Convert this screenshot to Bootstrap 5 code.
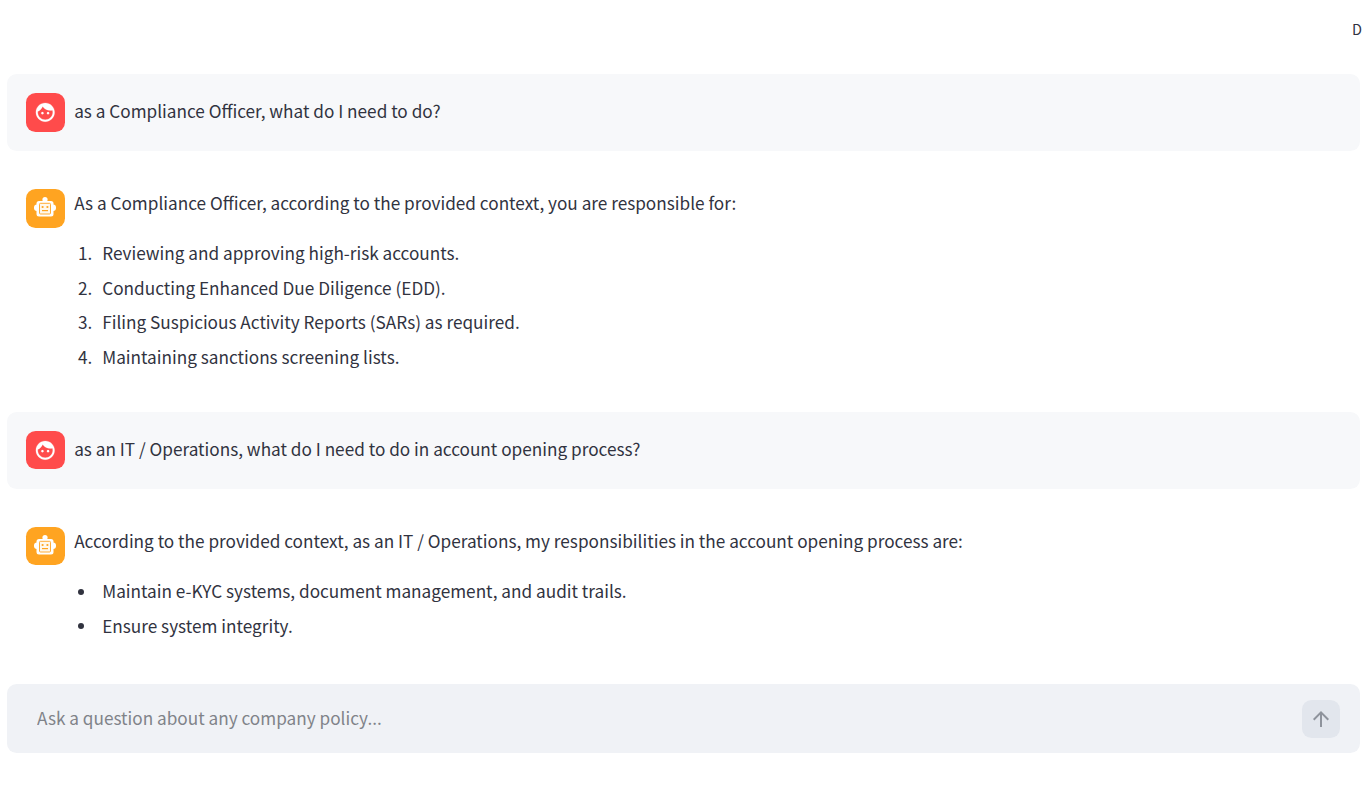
<!DOCTYPE html>
<html lang="en">
  <head>
    <meta charset="UTF-8" />
    <meta name="viewport" content="width=device-width, initial-scale=1.0" />
    <title>Company Policy Chat</title>
    <link href="https://cdn.jsdelivr.net/npm/bootstrap@5.3.3/dist/css/bootstrap.min.css" rel="stylesheet" />
    <style>
      html, body {
        height: 100%;
        overflow: hidden;
      }

      body {
        background-color: #fff;
        color: #31333f;
        font-family: "Noto Sans CJK JP", "Noto Sans", sans-serif;
        font-size: 17.2px;
        line-height: 30.72px;
      }

      .app-top {
        height: 74px;
        padding-top: 18px;
        font-size: 14.5px;
        line-height: 22px;
      }

      .chat-wrap {
        padding-left: 7px;
        padding-right: 2px;
      }

      .chat-msg {
        padding: 19.2px;
        gap: 9.6px;
        border-radius: 9.6px;
        margin-bottom: 19.2px;
      }

      .chat-msg-user {
        background-color: #f7f8fa;
      }

      .chat-avatar {
        width: 38.4px;
        height: 38.4px;
        border-radius: 9.6px;
        color: #fff;
      }

      .chat-avatar svg {
        fill: currentColor;
      }

      .face-icon {
        width: 22.5px;
        height: 22.5px;
        stroke: currentColor;
        stroke-width: 0.2;
      }

      .bot-icon {
        width: 24px;
        height: 24px;
      }

      .avatar-user {
        background-color: #ff4b4b;
      }

      .avatar-bot {
        background-color: #ffa421;
      }

      .chat-body {
        margin-top: -0.7px;
        margin-bottom: 0.7px;
      }

      .chat-body p {
        margin-bottom: 19.2px;
      }

      .chat-body p:last-child,
      .chat-body ul,
      .chat-body ol {
        margin-bottom: 0;
      }

      .chat-body ol {
        padding-left: 28px;
      }

      .chat-body ul {
        padding-left: 3.5px;
        list-style: none;
      }

      .chat-body li + li {
        margin-top: 3.84px;
      }

      .chat-body ol li::marker {
        content: counter(list-item) ".\00a0\00a0\200a\200a";
      }

      .chat-body ul li {
        display: flex;
        align-items: center;
      }

      .chat-body ul li::before {
        content: "";
        width: 6px;
        height: 6px;
        margin-right: 18.5px;
        border-radius: 50%;
        background-color: #31333f;
      }

      .chat-input-wrap {
        margin-top: 23px;
      }

      .chat-input-box {
        height: 69px;
        background-color: #f0f2f6;
        border-radius: 9.6px;
        padding-left: 30px;
        padding-right: 20px;
      }

      .chat-input {
        background: transparent;
        border: 0;
        padding: 0 0 1px;
        color: #31333f;
        font-size: 17.2px;
        line-height: 30.72px;
      }

      .chat-input:focus {
        background: transparent;
        box-shadow: none;
      }

      .chat-input::placeholder {
        color: #808389;
        opacity: 1;
      }

      .chat-send {
        width: 38.4px;
        height: 38.4px;
        border: 0;
        border-radius: 9.6px;
        background-color: #e2e6ed;
        color: #8e939c;
        padding: 0;
      }

      .chat-send svg {
        width: 24px;
        height: 24px;
        fill: currentColor;
      }
    </style>
  </head>
  <body>
    <!-- Toolbar, only the first letter of its label fits in the window -->
    <div class="app-top d-flex justify-content-end">
      <span>D</span>
    </div>

    <div class="chat-wrap">
      <div class="chat-msg chat-msg-user d-flex align-items-center">
        <div class="chat-avatar avatar-user d-flex align-items-center justify-content-center flex-shrink-0">
          <svg class="face-icon" viewBox="0 0 24 24"><path d="M9 11.75c-.69 0-1.25.56-1.25 1.25s.56 1.25 1.25 1.25 1.25-.56 1.25-1.25-.56-1.25-1.25-1.25zm6 0c-.69 0-1.25.56-1.25 1.25s.56 1.25 1.25 1.25 1.25-.56 1.25-1.25-.56-1.25-1.25-1.25zM12 2C6.48 2 2 6.48 2 12s4.48 10 10 10 10-4.48 10-10S17.52 2 12 2zm0 18c-4.41 0-8-3.59-8-8 0-.29.02-.58.05-.86 2.36-1.05 4.23-2.98 5.21-5.37C11.07 8.33 14.05 10 17.42 10c.78 0 1.53-.09 2.25-.26.21.71.33 1.47.33 2.26 0 4.41-3.59 8-8 8z"/></svg>
        </div>
        <div class="chat-body"><p>as a Compliance Officer, what do I need to do?</p></div>
      </div>

      <div class="chat-msg d-flex align-items-start">
        <div class="chat-avatar avatar-bot d-flex align-items-center justify-content-center flex-shrink-0">
          <svg class="bot-icon" viewBox="0 0 24 24">
            <circle cx="12" cy="3.6" r="2.6"/>
            <rect x="1" y="8.5" width="22" height="6.5" rx="3"/>
            <rect x="3.5" y="5" width="17" height="15.5" rx="2.5"/>
            <rect x="6.5" y="7.3" width="11" height="10.7" rx="1" fill="#fff8ec" stroke="#ffa421" stroke-width="0.9"/>
            <circle cx="9.6" cy="11" r="1.1" fill="#ffa421"/>
            <circle cx="14.4" cy="11" r="1.1" fill="#ffa421"/>
            <rect x="9" y="14" width="6" height="1.2" fill="#ffa421"/>
          </svg>
        </div>
        <div class="chat-body">
          <p>As a Compliance Officer, according to the provided context, you are responsible for:</p>
          <ol>
            <li>Reviewing and approving high-risk accounts.</li>
            <li>Conducting Enhanced Due Diligence (EDD).</li>
            <li>Filing Suspicious Activity Reports (SARs) as required.</li>
            <li>Maintaining sanctions screening lists.</li>
          </ol>
        </div>
      </div>

      <div class="chat-msg chat-msg-user d-flex align-items-center">
        <div class="chat-avatar avatar-user d-flex align-items-center justify-content-center flex-shrink-0">
          <svg class="face-icon" viewBox="0 0 24 24"><path d="M9 11.75c-.69 0-1.25.56-1.25 1.25s.56 1.25 1.25 1.25 1.25-.56 1.25-1.25-.56-1.25-1.25-1.25zm6 0c-.69 0-1.25.56-1.25 1.25s.56 1.25 1.25 1.25 1.25-.56 1.25-1.25-.56-1.25-1.25-1.25zM12 2C6.48 2 2 6.48 2 12s4.48 10 10 10 10-4.48 10-10S17.52 2 12 2zm0 18c-4.41 0-8-3.59-8-8 0-.29.02-.58.05-.86 2.36-1.05 4.23-2.98 5.21-5.37C11.07 8.33 14.05 10 17.42 10c.78 0 1.53-.09 2.25-.26.21.71.33 1.47.33 2.26 0 4.41-3.59 8-8 8z"/></svg>
        </div>
        <div class="chat-body"><p>as an IT / Operations, what do I need to do in account opening process?</p></div>
      </div>

      <div class="chat-msg d-flex align-items-start mb-0">
        <div class="chat-avatar avatar-bot d-flex align-items-center justify-content-center flex-shrink-0">
          <svg class="bot-icon" viewBox="0 0 24 24">
            <circle cx="12" cy="3.6" r="2.6"/>
            <rect x="1" y="8.5" width="22" height="6.5" rx="3"/>
            <rect x="3.5" y="5" width="17" height="15.5" rx="2.5"/>
            <rect x="6.5" y="7.3" width="11" height="10.7" rx="1" fill="#fff8ec" stroke="#ffa421" stroke-width="0.9"/>
            <circle cx="9.6" cy="11" r="1.1" fill="#ffa421"/>
            <circle cx="14.4" cy="11" r="1.1" fill="#ffa421"/>
            <rect x="9" y="14" width="6" height="1.2" fill="#ffa421"/>
          </svg>
        </div>
        <div class="chat-body">
          <p>According to the provided context, as an IT / Operations, my responsibilities in the account opening process are:</p>
          <ul>
            <li>Maintain e-KYC systems, document management, and audit trails.</li>
            <li>Ensure system integrity.</li>
          </ul>
        </div>
      </div>

      <div class="chat-input-wrap">
        <div class="chat-input-box d-flex align-items-center gap-3">
          <input class="chat-input form-control flex-grow-1" type="text" placeholder="Ask a question about any company policy..." />
          <button class="chat-send btn d-flex align-items-center justify-content-center flex-shrink-0" type="button" aria-label="Send">
            <svg viewBox="0 0 24 24"><path d="M4 12l1.41 1.41L11 7.83V20h2V7.83l5.58 5.59L20 12l-8-8-8 8z"/></svg>
          </button>
        </div>
      </div>
    </div>

    <script src="https://cdn.jsdelivr.net/npm/bootstrap@5.3.3/dist/js/bootstrap.bundle.min.js"></script>
  </body>
</html>
